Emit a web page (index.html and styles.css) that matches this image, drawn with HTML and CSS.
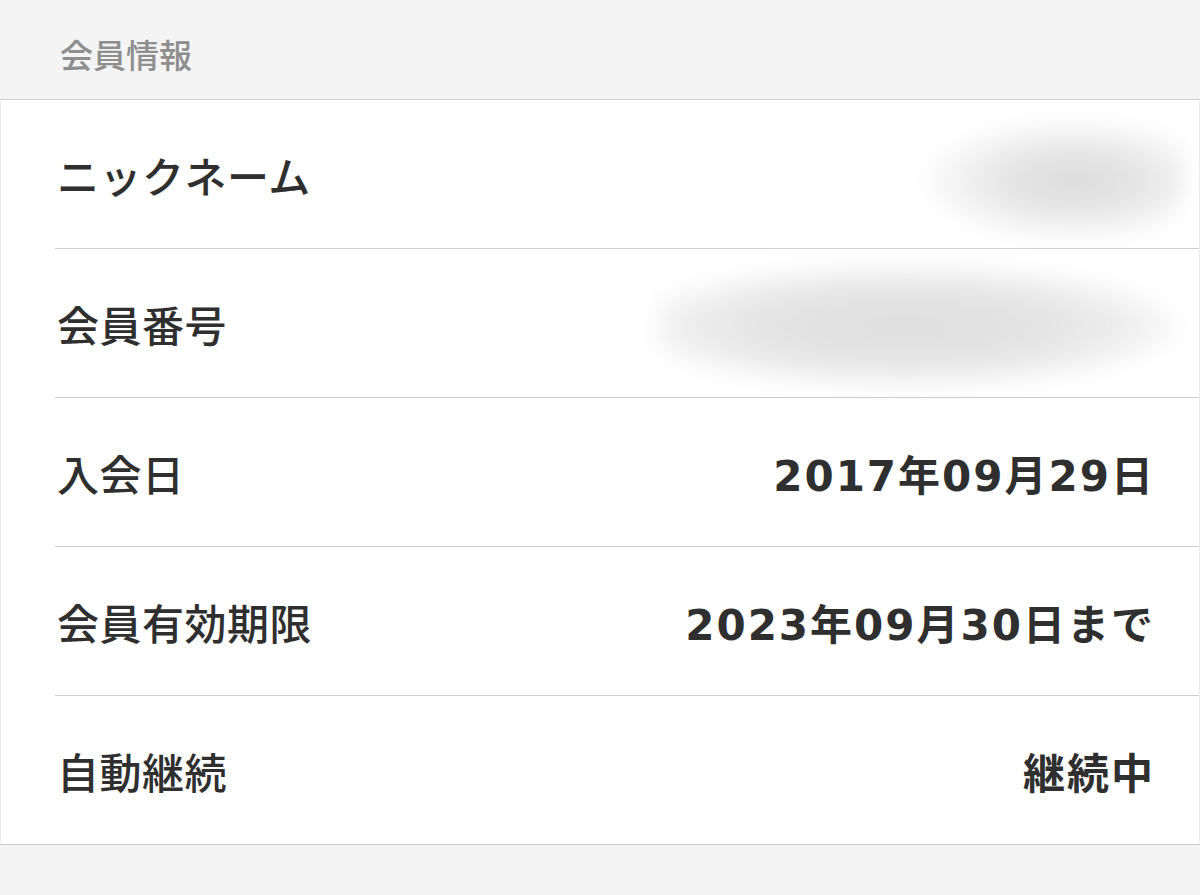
FILE: index.html
```html
<!DOCTYPE html>
<html lang="ja">
<head>
<meta charset="utf-8">
<title>会員情報</title>
<link rel="stylesheet" href="styles.css">
</head>
<body>
<div class="page">
  <header class="section-head">会員情報</header>
  <div class="card">
    <div class="row">
      <div class="label">ニックネーム</div>
      <div class="value"><span class="blur blur-short"></span></div>
    </div>
    <div class="row">
      <div class="label">会員番号</div>
      <div class="value"><span class="blur blur-long"></span></div>
    </div>
    <div class="row">
      <div class="label">入会日</div>
      <div class="value">2017年09月29日</div>
    </div>
    <div class="row">
      <div class="label">会員有効期限</div>
      <div class="value">2023年09月30日まで</div>
    </div>
    <div class="row last">
      <div class="label">自動継続</div>
      <div class="value">継続中</div>
    </div>
  </div>
  <div class="footer-space"></div>
</div>
</body>
</html>
```
FILE: styles.css
```css
html, body {
  margin: 0;
  padding: 0;
  background: #f4f4f4;
}
body {
  font-family: "Noto Sans CJK JP", "Noto Sans", sans-serif;
  color: #333;
}
.page {
  width: 1200px;
  height: 895px;
  overflow: hidden;
  background: #f4f4f4;
}
.section-head {
  height: 100px;
  box-sizing: border-box;
  border-bottom: 1px solid #cfcfcf;
  padding: 33px 0 0 60px;
  font-size: 33px;
  line-height: 42px;
  font-weight: 500;
  color: #8e8e8e;
  background: #f4f4f4;
}
.card {
  background: #fff;
  border-bottom: 1px solid #c8c8c8;
  border-left: 1px solid #ececec;
  border-right: 1px solid #ececec;
  padding-left: 54px;
}
.row {
  display: flex;
  align-items: center;
  justify-content: space-between;
  height: 148px;
  border-bottom: 1px solid #cdcdcd;
  padding-right: 46px;
}
.row.last {
  border-bottom: none;
}
.label {
  font-size: 42px;
  font-weight: 500;
  color: #2f2f2f;
  padding-left: 2px;
  letter-spacing: 0.5px;
}
.value {
  font-family: "DejaVu Sans", "Noto Sans CJK JP", sans-serif;
  font-size: 42px;
  font-weight: bold;
  color: #2f2f2f;
  letter-spacing: 2px;
  margin-right: -2px;
  display: flex;
  align-items: center;
}
.blur {
  display: block;
  filter: blur(10px);
}
.blur-short {
  width: 280px;
  height: 125px;
  margin-right: -30px;
  border-radius: 60px;
  background: radial-gradient(ellipse 55% 50% at 60% 55%, #dcdcdc 0%, #e4e4e4 40%, #f2f2f2 75%, rgba(255,255,255,0) 100%);
}
.blur-long {
  width: 550px;
  height: 128px;
  margin-right: -52px;
  margin-top: 6px;
  border-radius: 60px;
  background: radial-gradient(ellipse 52% 50% at 45% 50%, #dedede 0%, #e4e4e4 50%, #efefef 80%, rgba(255,255,255,0) 100%);
}
```
